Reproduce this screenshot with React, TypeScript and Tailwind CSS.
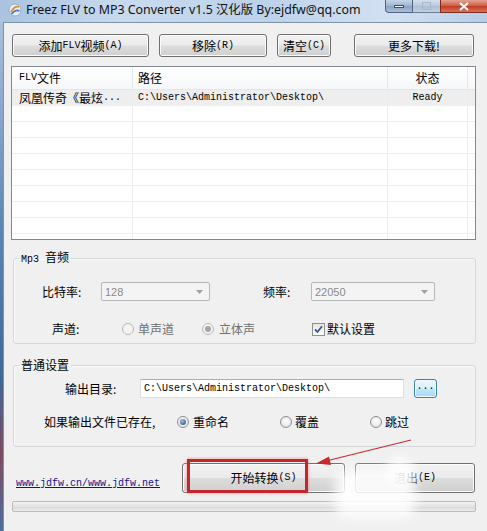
import React from "react";

function M({ children }: { children: React.ReactNode }) {
  return <span className="font-['Liberation_Mono',monospace] text-[10px]">{children}</span>;
}

function Btn({ className, children }: { className: string; children: React.ReactNode }) {
  return (
    <button
      className={`flex items-center justify-center rounded-[3px] border border-[#707070] bg-[linear-gradient(#f2f2f2,#ebebeb_48%,#dddddd_52%,#cfcfcf)] text-[12px] leading-[14px] text-black shadow-[inset_0_0_0_1px_#fbfbfb] ${className}`}
    >
      {children}
    </button>
  );
}

function Radio({ checked, disabled }: { checked?: boolean; disabled?: boolean }) {
  return (
    <span
      className={`flex h-[12px] w-[12px] shrink-0 items-center justify-center rounded-full border ${
        disabled
          ? "border-[#b9b9b9] bg-[#f3f3f3]"
          : "border-[#8e8f8f] bg-[radial-gradient(circle_at_50%_40%,#ffffff,#dcdcdc)]"
      }`}
    >
      {checked && (
        <span
          className={`h-[6px] w-[6px] rounded-full ${
            disabled ? "bg-[#a4a4a4]" : "bg-[radial-gradient(circle_at_40%_35%,#9fc0e3,#1e3e6a)]"
          }`}
        />
      )}
    </span>
  );
}

function Combo({ value, className }: { value: string; className: string }) {
  return (
    <div
      className={`flex h-[19px] items-center justify-between rounded-[2px] border border-[#b4b8bb] bg-[#f4f4f4] pl-[3px] pr-[6px] ${className}`}
    >
      <span className="font-['Liberation_Sans',sans-serif] text-[11px] text-[#8a8a8a]">{value}</span>
      <svg width="7" height="4" viewBox="0 0 7 4">
        <path d="M0 0 L7 0 L3.5 4Z" fill="#a0a0a0" />
      </svg>
    </div>
  );
}

const rows = Array.from({ length: 10 });

export default function App() {
  return (
    <div className="relative flex h-[531px] w-[487px] flex-col overflow-hidden bg-[#f0f0f0] font-['Noto_Sans_CJK_SC',sans-serif] text-[12px] leading-[14px] text-black">
      {/* title bar */}
      <div className="flex h-[22px] shrink-0 items-start bg-[linear-gradient(90deg,#a9c3e0,#c8daee_25%,#bcd2ea_55%,#d2e1f2_80%,#b7cde6)]">
        <div className="ml-[8px] mt-[3px]">
          <svg width="14" height="14" viewBox="0 0 14 14">
            <circle cx="7" cy="7" r="6" fill="#e8eef7" stroke="#8aa3c4" strokeWidth="0.8" />
            <path d="M3 9 Q7 2 11 4" stroke="#e08a2a" strokeWidth="1.8" fill="none" />
            <path d="M3.5 11 Q8 6 11.5 8" stroke="#4a78b8" strokeWidth="1.6" fill="none" />
          </svg>
        </div>
        <div className="ml-[4px] mt-[2px] font-['Noto_Sans','Noto_Sans_CJK_SC',sans-serif] text-[12.4px] leading-[16px] text-[#111]">
          Freez FLV to MP3 Converter v1.5 汉化版 By:ejdfw@qq.com
        </div>
        <div className="ml-auto flex h-[13px]">
          <div className="flex w-[28px] items-center justify-center rounded-bl-[4px] border border-t-0 border-[#4d6585] bg-[linear-gradient(#c5d5e8,#9fb5d0_50%,#8aa3c3_51%,#a9bfd9)]">
            <span className="h-[3px] w-[10px] border border-[#3d4f66] bg-white" />
          </div>
          <div className="flex w-[27px] items-center justify-center border-b border-[#6b7f99] bg-[linear-gradient(#d3dfec,#b9c9dc_50%,#acbed4_51%,#c0d0e2)]">
            <span className="h-[8px] w-[9px] border border-[#a8b6c6]" />
          </div>
          <div className="flex w-[47px] items-center justify-center border-b border-l border-[#7a2b22] bg-[linear-gradient(#e4a192,#cf5a44_50%,#c23b22_51%,#d8705a)]">
            <svg width="10" height="9" viewBox="0 0 10 9">
              <path d="M1 1 L9 8 M9 1 L1 8" stroke="#fff" strokeWidth="2.2" />
            </svg>
          </div>
        </div>
      </div>

      <div className="flex flex-1">
        {/* window frame */}
        <div className="w-[3px] shrink-0 bg-[linear-gradient(#a9c1dd,#5d86b4_40%,#3e6896_70%,#7f4b62_85%,#4a6f9c)]" />
        <div className="flex flex-1 flex-col border-l border-t border-[#7e92aa]">
          {/* top buttons */}
          <div className="mt-[11px] flex pl-[8px]">
            <Btn className="h-[23px] w-[137px]">
              添加<M>FLV</M>视频<M>(A)</M>
            </Btn>
            <Btn className="ml-[10px] h-[23px] w-[108px]">
              移除<M>(R)</M>
            </Btn>
            <Btn className="ml-[10px] h-[23px] w-[54px]">
              清空<M>(C)</M>
            </Btn>
            <Btn className="ml-[23px] h-[23px] w-[120px]">更多下载!</Btn>
          </div>

          {/* list view */}
          <div className="ml-[7px] mt-[9px] h-[174px] w-[465px] overflow-hidden border border-[#828790] bg-white">
            <div className="flex h-[23px] border-b border-[#e5e5e5] bg-[linear-gradient(#ffffff,#f6f7f9)]">
              <div className="flex w-[121px] items-center border-r border-[#e3e6ea] pl-[7px]">
                <M>FLV</M>文件
              </div>
              <div className="flex w-[255px] items-center border-r border-[#e3e6ea] pl-[5px]">路径</div>
              <div className="flex w-[80px] items-center justify-center border-r border-[#e3e6ea]">状态</div>
              <div className="flex-1" />
            </div>
            {rows.map((_, i) => (
              <div
                key={i}
                className={`flex h-[16px] border-b border-[#efefef] ${i === 0 ? "bg-[#eeeeee]" : ""}`}
              >
                <div className="flex w-[121px] items-center border-r border-[#ececec] pl-[7px]">
                  {i === 0 && (
                    <>
                      凤凰传奇《最炫<M>...</M>
                    </>
                  )}
                </div>
                <div className="flex w-[255px] items-center border-r border-[#ececec] pl-[5px]">
                  {i === 0 && <M>C:\Users\Administrator\Desktop\</M>}
                </div>
                <div className="flex w-[80px] items-center justify-center border-r border-[#ececec]">
                  {i === 0 && <M>Ready</M>}
                </div>
                <div className="flex-1" />
              </div>
            ))}
          </div>

          {/* mp3 group */}
          <fieldset className="ml-[9px] mt-[10px] w-[463px] rounded-[3px] border border-[#d3d8dc] pb-[6px] shadow-[inset_1px_1px_0_#fafafa]">
            <legend className="ml-[5px] px-[2px] leading-[14px]">
              <M>Mp3 </M>音频
            </legend>
            <div className="mt-[15px] flex h-[19px] items-center pl-[28px]">
              <span className="w-[59px]">比特率:</span>
              <Combo value="128" className="w-[109px]" />
              <span className="ml-[53px] w-[48px]">频率:</span>
              <Combo value="22050" className="w-[124px]" />
            </div>
            <div className="mt-[20px] flex h-[16px] items-center pl-[38px]">
              <span className="w-[70px]">声道:</span>
              <div className="flex w-[80px] items-center gap-[4px] text-[#6f6f6f]">
                <Radio disabled />
                <span>单声道</span>
              </div>
              <div className="flex w-[110px] items-center gap-[5px] text-[#6f6f6f]">
                <Radio checked disabled />
                <span>立体声</span>
              </div>
              <div className="flex items-center gap-[2px]">
                <span className="flex h-[13px] w-[13px] items-center justify-center border border-[#8e8f8f] bg-[linear-gradient(#e6e6e6,#ffffff)]">
                  <svg width="9" height="9" viewBox="0 0 9 9">
                    <path d="M1 4.5 L3.5 7 L8 1.2" stroke="#3f5590" strokeWidth="1.8" fill="none" />
                  </svg>
                </span>
                <span>默认设置</span>
              </div>
            </div>
          </fieldset>

          {/* general group */}
          <fieldset className="ml-[9px] mt-[14px] w-[463px] rounded-[3px] border border-[#d3d8dc] pb-[16px] shadow-[inset_1px_1px_0_#fafafa]">
            <legend className="ml-[5px] px-[2px] leading-[14px]">普通设置</legend>
            <div className="mt-[7px] flex h-[19px] items-center pl-[51px]">
              <span className="w-[75px]">输出目录:</span>
              <div className="flex h-[19px] w-[264px] items-center border border-[#dbdfe6] border-t-[#abadb3] bg-white pl-[3px]">
                <M>C:\Users\Administrator\Desktop\</M>
              </div>
              <div className="ml-[10px] flex h-[19px] w-[23px] items-end justify-center rounded-[3px] border border-[#3c7fb1] bg-[linear-gradient(#eaf6fd,#d9f0fc_50%,#bee6fd_51%,#a7d9f5)] pb-[3px] shadow-[inset_0_0_0_1px_#f4fbff]">
                <M>...</M>
              </div>
            </div>
            <div className="mt-[16px] flex h-[16px] items-center pl-[30px]">
              <span className="w-[133px]">如果输出文件已存在,</span>
              <div className="flex w-[103px] items-center gap-[4px]">
                <Radio checked />
                <span>重命名</span>
              </div>
              <div className="flex w-[90px] items-center gap-[3px]">
                <Radio />
                <span>覆盖</span>
              </div>
              <div className="flex items-center gap-[3px]">
                <Radio />
                <span>跳过</span>
              </div>
            </div>
          </fieldset>

          {/* bottom */}
          <div className="mt-[16px] flex h-[30px] pl-[12px]">
            <div className="w-[166px] pt-[11px]">
              <span className="font-['Liberation_Mono',monospace] text-[10px] leading-[12px] text-[#14148a] underline">
                www.jdfw.cn/www.jdfw.net
              </span>
            </div>
            <Btn className="h-[30px] w-[163px]">
              开始转换<M>(S)</M>
            </Btn>
            <Btn className="ml-[10px] h-[30px] w-[120px]">
              退出<M>(E)</M>
            </Btn>
          </div>
          <div className="ml-[8px] mt-[8px] h-[11px] w-[464px] rounded-[2px] border border-[#bcbcbc] bg-[linear-gradient(#f3f3f3,#e2e2e2_50%,#d9d9d9_55%,#ececec)]" />
        </div>
      </div>

      {/* annotation overlays */}
      <div className="pointer-events-none absolute left-[187px] top-[459px] h-[34px] w-[121px] border-[3px] border-[#c2262e] shadow-[0_0_3px_#e88]" />
      <svg className="pointer-events-none absolute left-0 top-0" width="487" height="531">
        <line x1="411" y1="440" x2="326" y2="461" stroke="#c42a30" strokeWidth="1.2" />
        <path d="M316 463.5 L329 456.5 L331 465Z" fill="#c42a30" />
      </svg>
      <div className="pointer-events-none absolute left-[335px] top-[470px] h-[48px] w-[80px] rounded-[12px] bg-white/85 blur-[6px]" />
      <div className="pointer-events-none absolute left-[385px] top-[456px] h-[30px] w-[30px] rounded-full bg-white/70 blur-[5px]" />
    </div>
  );
}
